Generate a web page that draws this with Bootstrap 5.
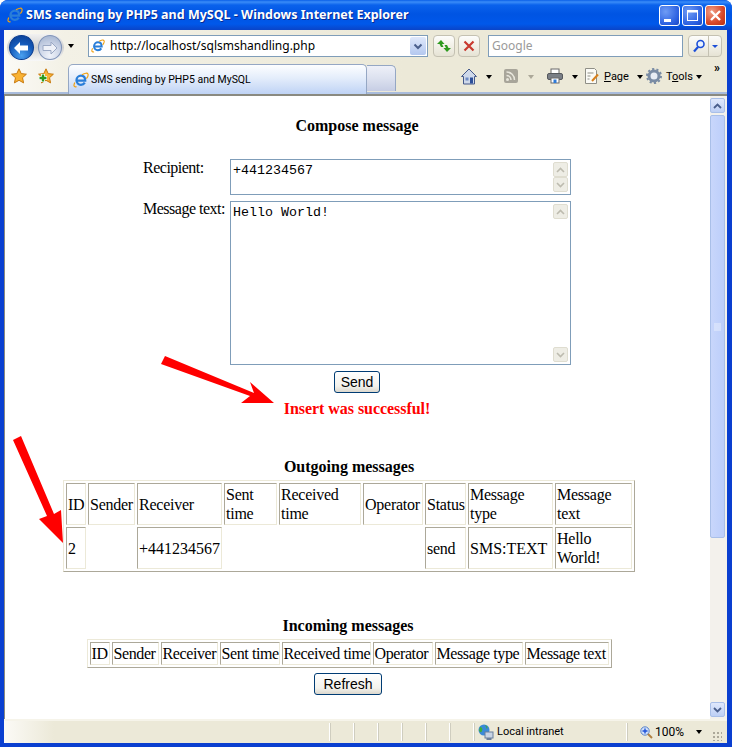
<!DOCTYPE html>
<html lang="en">
<head>
  <meta charset="UTF-8" />
  <meta name="viewport" content="width=device-width, initial-scale=1.0"/>
  <title>SMS sending by PHP5 and MySQL</title>
  <link href="https://cdn.jsdelivr.net/npm/bootstrap@5.3.0/dist/css/bootstrap.min.css" rel="stylesheet">
  <style>
    body { background: #fff; margin: 0; overflow: hidden; font-family: "Noto Sans", sans-serif; }
    .xp-window { width: 732px; height: 747px; border-radius: 8px 8px 0 0; background: #0a3fd0; overflow: hidden; }
    .xp-fix { flex: none; }
    /* title bar */
    .xp-title { height: 30px; flex: none; padding: 0 6px 0 7px; color: #fff; font-size: 12.5px; font-weight: 700; text-shadow: 1px 1px 0 #0a2a90;
      background: linear-gradient(#0a5fe8 0, #3a8cf8 2px, #0a62ec 5px, #0054e3 14px, #0058ea 24px, #0a44c8 30px); }
    .xp-title-text { margin-left: 3px; white-space: nowrap; }
    .xp-wbtn { width: 21px; height: 21px; border: 1px solid #fff; border-radius: 3px; margin-left: 2px; position: relative;
      background: radial-gradient(circle at 30% 30%, #6f9cf5, #2a5fe0 70%, #1c46c0); }
    .xp-wbtn-close { background: radial-gradient(circle at 30% 30%, #f0a088, #d8482a 60%, #b83010); }
    .xp-frame { flex: 1 1 auto; min-height: 0; padding: 0 5px 4px 4px; }
    .xp-inner { height: 100%; background: #ece9d8; }
    /* nav rows */
    .xp-nav { height: 32px; flex: none; padding-top: 5px; background: linear-gradient(90deg, #fbfaf6 0, #f3f1e6 60px, #ece9d8 400px); }
    .xp-backpill { width: 57px; height: 27px; margin-left: 3px; border-radius: 14px; padding: 1px 2px; margin-top: -1px;
      background: linear-gradient(#f2f2f2, #cfcfcf 50%, #f8f8f8); }
    .xp-circ { width: 25px; height: 25px; border-radius: 50%; border: 1px solid #7f93b8; }
    .xp-circ-back { background: radial-gradient(circle at 50% 85%, #4aa0f0, #1358b8 55%, #0a3c90); border-color: #0a3c90; }
    .xp-circ-fwd { background: radial-gradient(circle at 50% 85%, #f0f3fa, #c6d0e4 55%, #9fb0cc); margin-left: 4px; }
    .xp-caret { width: 0; height: 0; flex: none; border-left: 3.5px solid transparent; border-right: 3.5px solid transparent; border-top: 4px solid #000; }
    .xp-caret-nav { margin-top: 9px; }
    .xp-caret-dim { border-top-color: #aca899; }
    .xp-caret-small { border-left-width: 3px; border-right-width: 3px; border-top-width: 3px; border-top-color: #1c4fd8; }
    .xp-field { height: 22px; background: #fff; border: 1px solid #7f9db9; font-size: 12px; flex: none; white-space: nowrap; }
    .xp-addr { width: 340px; padding-left: 2px; color: #000; margin-left: 14px; }
    .xp-addr-text { margin-left: 5px; }
    .xp-combo { width: 16px; height: 18px; margin: 1px 1px 1px auto; background: linear-gradient(#dfe8fb, #b4c8ef); border-radius: 2px; }
    .xp-tbtn { width: 22px; height: 22px; flex: none; border: 1px solid #c4c1b2; border-radius: 4px; background: linear-gradient(#fdfdfb, #e6e3d4); }
    .xp-stop { margin-left: 3px; }
    .xp-refresh { margin-left: 5px; }
    .xp-search { width: 195px; margin-left: 8px; padding-left: 3px; color: #9a9a9a; }
    .xp-searchbtn { width: 34px; height: 22px; flex: none; margin-left: 5px; border: 1px solid #c4c1b2; border-radius: 4px; background: linear-gradient(#fdfdfb, #e6e3d4); }
    .xp-searchbtn-arrow { width: 13px; border-left: 1px solid #c4c1b2; height: 100%; }
    .xp-searchbtn-main { width: 20px; }
    .xp-tabs { height: 34px; flex: none; color: #000; font-family: Roboto, sans-serif; font-size: 11px; white-space: nowrap;
      background: linear-gradient(90deg, #fbfaf6 0, #f3f1e6 60px, #ece9d8 400px); border-bottom: 2px solid #8a8a80; box-shadow: inset 0 -2px 0 #a9bcdc; }
    .xp-tab { width: 299px; height: 30px; margin-top: 2px; margin-left: 14px; padding-left: 4px; border: 1px solid #95a7c4; border-bottom: 0; border-radius: 5px 5px 0 0;
      background: linear-gradient(#fdfeff, #e4edfb 45%, #bfd3f5); }
    .xp-tab-text { margin-left: 2px; font-size: 10.5px; }
    .xp-tabstub { width: 29px; height: 26px; margin-top: 3px; border: 1px solid #95a7c4; border-bottom: 0; border-left: 0; border-radius: 0 5px 0 0;
      background: linear-gradient(#eef0f8, #dce1ef 50%, #c6cde4); }
    .xp-ticon { margin-top: 6px; }
    .xp-tcaret { margin-top: 13px; }
    .xp-m2 { margin-left: 2px; } .xp-m3 { margin-left: 3px; } .xp-m4 { margin-left: 4px; } .xp-m5 { margin-left: 5px; } .xp-m6 { margin-left: 6px; }
    .xp-m7 { margin-left: 7px; } .xp-m8 { margin-left: 8px; } .xp-m9 { margin-left: 9px; } .xp-m10 { margin-left: 10px; }
    .xp-m11 { margin-left: 11px; } .xp-m12 { margin-left: 12px; } .xp-m13 { margin-left: 13px; } .xp-m65 { margin-left: 65px; }
    .xp-toolword { width: 25px; flex: none; margin-top: 7px; line-height: 15px; }
    .xp-chev { font-size: 12px; font-weight: 700; line-height: 1; margin-left: 12px; margin-top: 0; }
    /* page */
    .xp-viewport { flex: 1 1 auto; min-height: 0; background: #fff; border-left: 1px solid #8a8a80; }
    .xp-page { flex: 1 1 auto; min-width: 0; color: #000; font-family: "Liberation Serif", serif; font-size: 16px; line-height: 19px; }
    .xp-h { font-weight: 700; text-align: center; }
    .xp-compose { padding-top: 20px; padding-right: 1px; }
    .xp-form { margin-top: 24px; }
    .xp-label { width: 87px; flex: none; white-space: nowrap; margin-top: -1px; letter-spacing: -.5px; }
    .xp-box { width: 341px; flex: none; border: 1px solid #7f9db9; padding: 2px; background: #fff; }
    .xp-box-small { height: 36px; }
    .xp-box-big { height: 164px; margin-top: 6px; }
    .xp-input { flex: 1 1 auto; min-width: 0; height: 100%; border: 0; border-radius: 0; padding: 1px 0 0; resize: none; overflow: hidden; outline: 0;
      font-family: "Liberation Mono", monospace; font-size: 13.33px; line-height: 15px; color: #000; background: #fff; }
    .xp-sbar { width: 15px; flex: none; }
    .xp-sbtn { width: 15px; height: 15px; border: 1px solid #dfddd0; border-radius: 2px; background: #eeede5; }
    .xp-btn { font-family: "Liberation Sans", sans-serif; font-size: 14px; line-height: 16px; padding: 2px 0; height: 22px; color: #000;
      border: 1px solid #003c74; border-radius: 3px; background: linear-gradient(#fff, #f3f2ec 70%, #dcd8ce); }
    .xp-send { width: 46px; margin-top: 6px; }
    .xp-msg { color: #f00; font-weight: 700; text-align: center; margin-top: 6px; letter-spacing: -.05px; }
    .xp-lower { padding-right: 17px; }
    .xp-out-h { margin-top: 39px; }
    .xp-in-h { margin-top: 44px; padding-right: 2px; }
    .xp-grid { border-collapse: separate; border-spacing: 2px; border: 1px solid; border-color: #ece9d8 #aca899 #aca899 #ece9d8; margin: 4px auto 0; table-layout: fixed; letter-spacing: -.25px; }
    .xp-grid td { border: 1px solid; border-color: #aca899 #ece9d8 #ece9d8 #aca899; padding: 1px; vertical-align: middle; }
    .xp-grid td.xp-wide { letter-spacing: 0; }
    .xp-grid td.xp-blank { border-color: transparent; }
    .xp-grid-out { width: 572px; }
    .xp-grid-in { width: 525px; white-space: nowrap; letter-spacing: -.4px; }
    .xp-c-id { width: 20px; } .xp-c-sender { width: 47px; } .xp-c-recv { width: 85px; } .xp-c-sent { width: 53px; } .xp-c-rtime { width: 82px; }
    .xp-c-op { width: 60px; } .xp-c-status { width: 41px; } .xp-c-type { width: 85px; } .xp-c-text { width: 77px; }
    .xp-i-recv { width: 57px; } .xp-i-sent { width: 60px; } .xp-i-rtime { width: 89px; } .xp-i-type { width: 88px; } .xp-i-text { width: 84px; }
    .xp-refreshbox { padding-right: 2px; }
    .xp-refreshbtn { width: 68px; margin-top: 5px; }
    /* page scrollbar */
    .xp-vbar { width: 17px; flex: none; padding: 2px 1px 2px 0; background: #f3f1ec; }
    .xp-vbtn { width: 15px; height: 15px; border: 1px solid #a9bfe8; border-radius: 2px; background: linear-gradient(#dfe8fc, #bdcff5); }
    .xp-vthumb { width: 15px; height: 423px; margin-top: 2px; border: 1px solid #a9bfe8; border-radius: 2px; background: linear-gradient(90deg, #c8d6fb, #bccefa); }
    /* status bar */
    .xp-status { height: 24px; flex: none; color: #000; font-family: Roboto, sans-serif; font-size: 11px; border-top: 2px solid #f6f4ea; background: linear-gradient(90deg, #fbfaf6 0, #ece9d8 50px); }
    .xp-sep { width: 24px; height: 18px; flex: none; border-right: 1px solid #fff; box-shadow: 1px 0 0 #cfcdbf; }
    .xp-sep-first { margin-left: 301px; width: 25px; }
    .xp-zone { margin-left: 4px; width: 149px; height: 18px; border-right: 1px solid #fff; box-shadow: 1px 0 0 #cfcdbf; }
    .xp-zoomarea { margin-left: 13px; font-size: 12px; }
    .xp-grip { width: 10px; height: 10px; margin-left: 10px; margin-top: 8px; background-image: radial-gradient(#aca899 1px, transparent 1.2px); background-size: 4px 4px; }
    .xp-overlay { position: absolute; top: 0; left: 0; pointer-events: none; }
  </style>
</head>
<body>
  <svg width="0" height="0" class="position-absolute">
    <symbol id="ie" viewBox="0 0 16 16">
      <path d="M4 8.600h8.200c0-3-1.800-4.900-4.200-4.900S3.500 5.700 3.500 8.300s1.900 4.500 4.400 4.500c1.800 0 3.100-.8 3.900-2.100" fill="none" stroke="#2a7ed8" stroke-width="2.300"/>
      <path d="M1.800 10.500C.2 13.800 1 15.400 3.500 14.600M9 2.700c3-1.700 5.500-2 6-.6.400 1.100-.3 2.900-1.600 4.600" fill="none" stroke="#f0a010" stroke-width="1.200"/>
    </symbol>
    <symbol id="star" viewBox="0 0 16 16">
      <path d="M8 .8l2.200 4.800 5.200.6-3.900 3.500 1.100 5.200L8 12.300l-4.600 2.600 1.100-5.200L.6 6.200l5.200-.6z" fill="#f9b233" stroke="#c87a10"/>
    </symbol>
  </svg>

  <div class="xp-window position-relative d-flex flex-column">
    <!-- Title bar -->
    <div class="xp-title d-flex align-items-center">
      <svg width="16" height="16"><use href="#ie"/></svg>
      <span class="xp-title-text">SMS sending by PHP5 and MySQL - Windows Internet Explorer</span>
      <span class="ms-auto xp-wbtn">
        <svg width="19" height="19"><rect x="4" y="13" width="7" height="3" fill="#fff"/></svg>
      </span>
      <span class="xp-wbtn">
        <svg width="19" height="19"><rect x="4.500" y="4.500" width="10" height="10" fill="none" stroke="#fff"/><rect x="4" y="4" width="11" height="2.500" fill="#fff"/></svg>
      </span>
      <span class="xp-wbtn xp-wbtn-close">
        <svg width="19" height="19"><path d="M5 5l9 9M14 5l-9 9" stroke="#fff" stroke-width="2.400"/></svg>
      </span>
    </div>

    <div class="xp-frame d-flex flex-column">
      <div class="xp-inner d-flex flex-column">
        <!-- Address row -->
        <div class="xp-nav d-flex align-items-start">
          <div class="xp-backpill d-flex xp-fix">
            <span class="xp-circ xp-circ-back d-flex align-items-center justify-content-center">
              <svg width="16" height="14"><path d="M1 7l6-6v3.500h8v5H7V13z" fill="#fff"/></svg>
            </span>
            <span class="xp-circ xp-circ-fwd d-flex align-items-center justify-content-center">
              <svg width="16" height="14"><path d="M15 7L9 1v3.500H1v5h8V13z" fill="#eef1f8" stroke="#9aa8c4"/></svg>
            </span>
          </div>
          <span class="xp-caret xp-caret-nav xp-m4"></span>
          <div class="xp-field xp-addr d-flex align-items-center">
            <svg width="14" height="14"><use href="#ie"/></svg>
            <span class="xp-addr-text">http://localhost/sqlsmshandling.php</span>
            <span class="xp-combo d-flex align-items-center justify-content-center">
              <svg width="10" height="7"><path d="M1.500 1.500L5 5l3.500-3.500" fill="none" stroke="#4a5f8c" stroke-width="2"/></svg>
            </span>
          </div>
          <span class="xp-tbtn xp-refresh d-flex align-items-center justify-content-center">
            <svg width="16" height="14"><path d="M5 1L1 5h2.500L5 8h2.500L6 5h2.500zM11 13l4-4h-2.500L11 6H8.500l1.500 3H7.500z" fill="#2e9a1e"/></svg>
          </span>
          <span class="xp-tbtn xp-stop d-flex align-items-center justify-content-center">
            <svg width="12" height="12"><path d="M1.500 1.500l9 9M10.500 1.500l-9 9" stroke="#c83a30" stroke-width="2.200"/></svg>
          </span>
          <div class="xp-field xp-search d-flex align-items-center">Google</div>
          <div class="xp-searchbtn d-flex">
            <span class="xp-searchbtn-main d-flex align-items-center justify-content-center">
              <svg width="14" height="14"><circle cx="8.500" cy="5" r="3.500" fill="#eaf2ff" stroke="#1c4fd8" stroke-width="1.600"/><path d="M6 8l-4 4.500" stroke="#1c4fd8" stroke-width="2.200"/></svg>
            </span>
            <span class="xp-searchbtn-arrow d-flex align-items-center justify-content-center"><span class="xp-caret xp-caret-small"></span></span>
          </div>
        </div>

        <!-- Tab row -->
        <div class="xp-tabs d-flex align-items-start">
          <svg class="xp-m7 xp-ticon xp-fix" width="16" height="16"><use href="#star"/></svg>
          <svg class="xp-m11 xp-ticon xp-fix" width="16" height="16" viewBox="0 0 16 16">
            <use href="#star"/>
            <path d="M5 6v8M1 10h8" stroke="#fff" stroke-width="4"/>
            <path d="M5 6.500v7M1.500 10h7" stroke="#2e9a1e" stroke-width="2.400"/>
          </svg>
          <div class="xp-tab d-flex align-items-center xp-fix">
            <svg width="16" height="16"><use href="#ie"/></svg>
            <span class="xp-tab-text">SMS sending by PHP5 and MySQL</span>
          </div>
          <div class="xp-tabstub xp-fix"></div>

          <svg class="xp-m65 xp-ticon xp-fix" width="16" height="17" viewBox="0 0 16 17">
            <path d="M8 1L.5 8.500h2V16h11V8.500h2z" fill="#cfd9ea" stroke="#45598a"/>
            <rect x="9" y="9.500" width="3" height="6" fill="#2c4f9a"/>
            <rect x="4.500" y="9.500" width="3" height="3" fill="#6f8cc4"/>
          </svg>
          <span class="xp-caret xp-m9 xp-tcaret"></span>
          <svg class="xp-m12 xp-ticon xp-fix" width="14" height="15" viewBox="0 0 14 15">
            <rect width="14" height="14" rx="2" y="1" fill="#a8a59a"/>
            <circle cx="3.500" cy="11.500" r="1.500" fill="#e8e6dc"/>
            <path d="M2.500 7.500a4.500 4.500 0 0 1 4.500 4.500M2.500 4a8 8 0 0 1 8 8" fill="none" stroke="#e8e6dc" stroke-width="1.500"/>
          </svg>
          <span class="xp-caret xp-caret-dim xp-m10 xp-tcaret"></span>
          <svg class="xp-m13 xp-ticon xp-fix" width="16" height="16" viewBox="0 0 16 16">
            <rect x="4" y="1" width="8" height="5" fill="#fff" stroke="#6a6a6a"/>
            <rect x=".5" y="5.500" width="15" height="6" rx="1.500" fill="#7a7f86" stroke="#55585c"/>
            <rect x="4" y="10" width="8" height="5" fill="#fff" stroke="#6a6a6a"/>
            <rect x="6.500" y="11.500" width="3" height="3.500" fill="#2e7ad8"/>
          </svg>
          <span class="xp-caret xp-m9 xp-tcaret"></span>
          <svg class="xp-m6 xp-ticon xp-fix" width="16" height="16" viewBox="0 0 16 16">
            <path d="M1.500.5h9l2 2v13h-11z" fill="#fbfbf6" stroke="#8f8f86"/>
            <path d="M3.500 5h6M3.500 8h3M3.500 11h2" stroke="#8f8f86"/>
            <path d="M8 13l6-6.500" stroke="#d8801c" stroke-width="2"/>
          </svg>
          <span class="xp-toolword xp-m4"><u>P</u>age</span>
          <span class="xp-caret xp-m8 xp-tcaret"></span>
          <svg class="xp-m3 xp-ticon xp-fix" width="16" height="16" viewBox="0 0 16 16">
            <circle cx="8" cy="8" r="5" fill="#e8edf4" stroke="#7a8ca4" stroke-width="3"/>
            <circle cx="8" cy="8" r="7" fill="none" stroke="#7a8ca4" stroke-width="2" stroke-dasharray="2.200 2.200"/>
          </svg>
          <span class="xp-toolword xp-m4">T<u>o</u>ols</span>
          <span class="xp-caret xp-m5 xp-tcaret"></span>
          <span class="xp-chev">&raquo;</span>
        </div>

        <!-- Page area -->
        <div class="xp-viewport d-flex">
          <div class="xp-page">
            <div class="xp-compose">
              <div class="xp-h">Compose message</div>
              <form class="xp-form">
                <div class="d-flex justify-content-center">
                  <div class="xp-label">Recipient:</div>
                  <div class="xp-box xp-box-small d-flex">
                    <textarea class="xp-input" rows="1">+441234567</textarea>
                    <div class="xp-sbar d-flex flex-column">
                      <span class="xp-sbtn d-flex align-items-center justify-content-center"><svg width="9" height="6"><path d="M1 5l3.500-3.500L8 5" fill="none" stroke="#bdbbaf" stroke-width="1.600"/></svg></span>
                      <span class="xp-sbtn d-flex align-items-center justify-content-center mt-auto"><svg width="9" height="6"><path d="M1 1l3.500 3.500L8 1" fill="none" stroke="#bdbbaf" stroke-width="1.600"/></svg></span>
                    </div>
                  </div>
                </div>
                <div class="d-flex justify-content-center">
                  <div class="xp-label mt-1">Message text:</div>
                  <div class="xp-box xp-box-big d-flex">
                    <textarea class="xp-input" rows="10">Hello World!</textarea>
                    <div class="xp-sbar d-flex flex-column">
                      <span class="xp-sbtn d-flex align-items-center justify-content-center"><svg width="9" height="6"><path d="M1 5l3.500-3.500L8 5" fill="none" stroke="#bdbbaf" stroke-width="1.600"/></svg></span>
                      <span class="xp-sbtn d-flex align-items-center justify-content-center mt-auto"><svg width="9" height="6"><path d="M1 1l3.500 3.500L8 1" fill="none" stroke="#bdbbaf" stroke-width="1.600"/></svg></span>
                    </div>
                  </div>
                </div>
                <div class="text-center">
                  <button type="button" class="btn xp-btn xp-send">Send</button>
                </div>
              </form>
              <div class="xp-msg">Insert was successful!</div>
            </div>

            <div class="xp-lower">
              <div class="xp-h xp-out-h">Outgoing messages</div>
              <table class="xp-grid xp-grid-out">
                <colgroup>
                  <col class="xp-c-id"><col class="xp-c-sender"><col class="xp-c-recv"><col class="xp-c-sent"><col class="xp-c-rtime">
                  <col class="xp-c-op"><col class="xp-c-status"><col class="xp-c-type"><col class="xp-c-text">
                </colgroup>
                <tr>
                  <td>ID</td><td>Sender</td><td>Receiver</td><td>Sent time</td><td>Received time</td>
                  <td>Operator</td><td>Status</td><td>Message type</td><td>Message text</td>
                </tr>
                <tr>
                  <td>2</td><td class="xp-blank"></td><td class="xp-wide">+441234567</td><td class="xp-blank"></td><td class="xp-blank"></td>
                  <td class="xp-blank"></td><td>send</td><td class="xp-wide">SMS:TEXT</td><td>Hello World!</td>
                </tr>
              </table>

              <div class="xp-h xp-in-h">Incoming messages</div>
              <table class="xp-grid xp-grid-in">
                <colgroup>
                  <col class="xp-c-id"><col class="xp-c-sender"><col class="xp-i-recv"><col class="xp-i-sent"><col class="xp-i-rtime">
                  <col class="xp-c-op"><col class="xp-i-type"><col class="xp-i-text">
                </colgroup>
                <tr>
                  <td>ID</td><td>Sender</td><td>Receiver</td><td>Sent time</td><td>Received time</td>
                  <td>Operator</td><td>Message type</td><td>Message text</td>
                </tr>
              </table>
              <div class="text-center xp-refreshbox">
                <button type="button" class="btn xp-btn xp-refreshbtn">Refresh</button>
              </div>
            </div>
          </div>

          <div class="xp-vbar d-flex flex-column">
            <span class="xp-vbtn d-flex align-items-center justify-content-center"><svg width="9" height="6"><path d="M1 5l3.500-3.500L8 5" fill="none" stroke="#4a5f8c" stroke-width="1.800"/></svg></span>
            <span class="xp-vthumb d-flex align-items-center justify-content-center"><svg width="7" height="8"><path d="M0 1h7M0 3h7M0 5h7M0 7h7" stroke="#e8eefc"/></svg></span>
            <span class="xp-vbtn d-flex align-items-center justify-content-center mt-auto"><svg width="9" height="6"><path d="M1 1l3.500 3.500L8 1" fill="none" stroke="#4a5f8c" stroke-width="1.800"/></svg></span>
          </div>
        </div>

        <!-- Status bar -->
        <div class="xp-status d-flex align-items-center">
          <span class="xp-sep xp-sep-first"></span><span class="xp-sep"></span><span class="xp-sep"></span><span class="xp-sep"></span><span class="xp-sep"></span><span class="xp-sep"></span><span class="xp-sep"></span>
          <div class="xp-zone d-flex align-items-center">
            <svg width="16" height="16" viewBox="0 0 16 16">
              <circle cx="6" cy="6" r="5.500" fill="#3a8ad8"/>
              <path d="M2 3c2 0 3 2 2 4s-2 1-3 0M7 1c2 1 3 2 2 4" fill="#3fae3a"/>
              <rect x="7" y="8" width="8" height="6" fill="#c8d4e4" stroke="#6a7f9c"/>
              <rect x="8.500" y="14" width="5" height="2" fill="#6a7f9c"/>
            </svg>
            <span class="xp-m3">Local intranet</span>
          </div>
          <div class="xp-zoomarea d-flex align-items-center">
            <svg width="13" height="13" viewBox="0 0 13 13">
              <circle cx="5" cy="5" r="4.200" fill="#cfe0fa" stroke="#5a82c8"/>
              <path d="M5 2.500v5M2.500 5h5" stroke="#1c4fd8" stroke-width="1.400"/>
              <path d="M8 8l4 4" stroke="#b08040" stroke-width="2"/>
            </svg>
            <span class="xp-m2">100%</span>
            <span class="xp-caret xp-m12"></span>
          </div>
          <span class="xp-grip"></span>
        </div>
      </div>
    </div>

    <!-- Red annotation arrows over the page -->
    <svg class="xp-overlay" width="732" height="747">
      <polygon points="165,356 254,393 250,382 274,403 241,403 250,396 161,364" fill="#f00"/>
      <polygon points="21,436 54,514 61,510 63,543 39,519 47,516 13,440" fill="#f00"/>
    </svg>
  </div>
  <script src="https://cdn.jsdelivr.net/npm/bootstrap@5.3.0/dist/js/bootstrap.bundle.min.js"></script>
</body>
</html>
